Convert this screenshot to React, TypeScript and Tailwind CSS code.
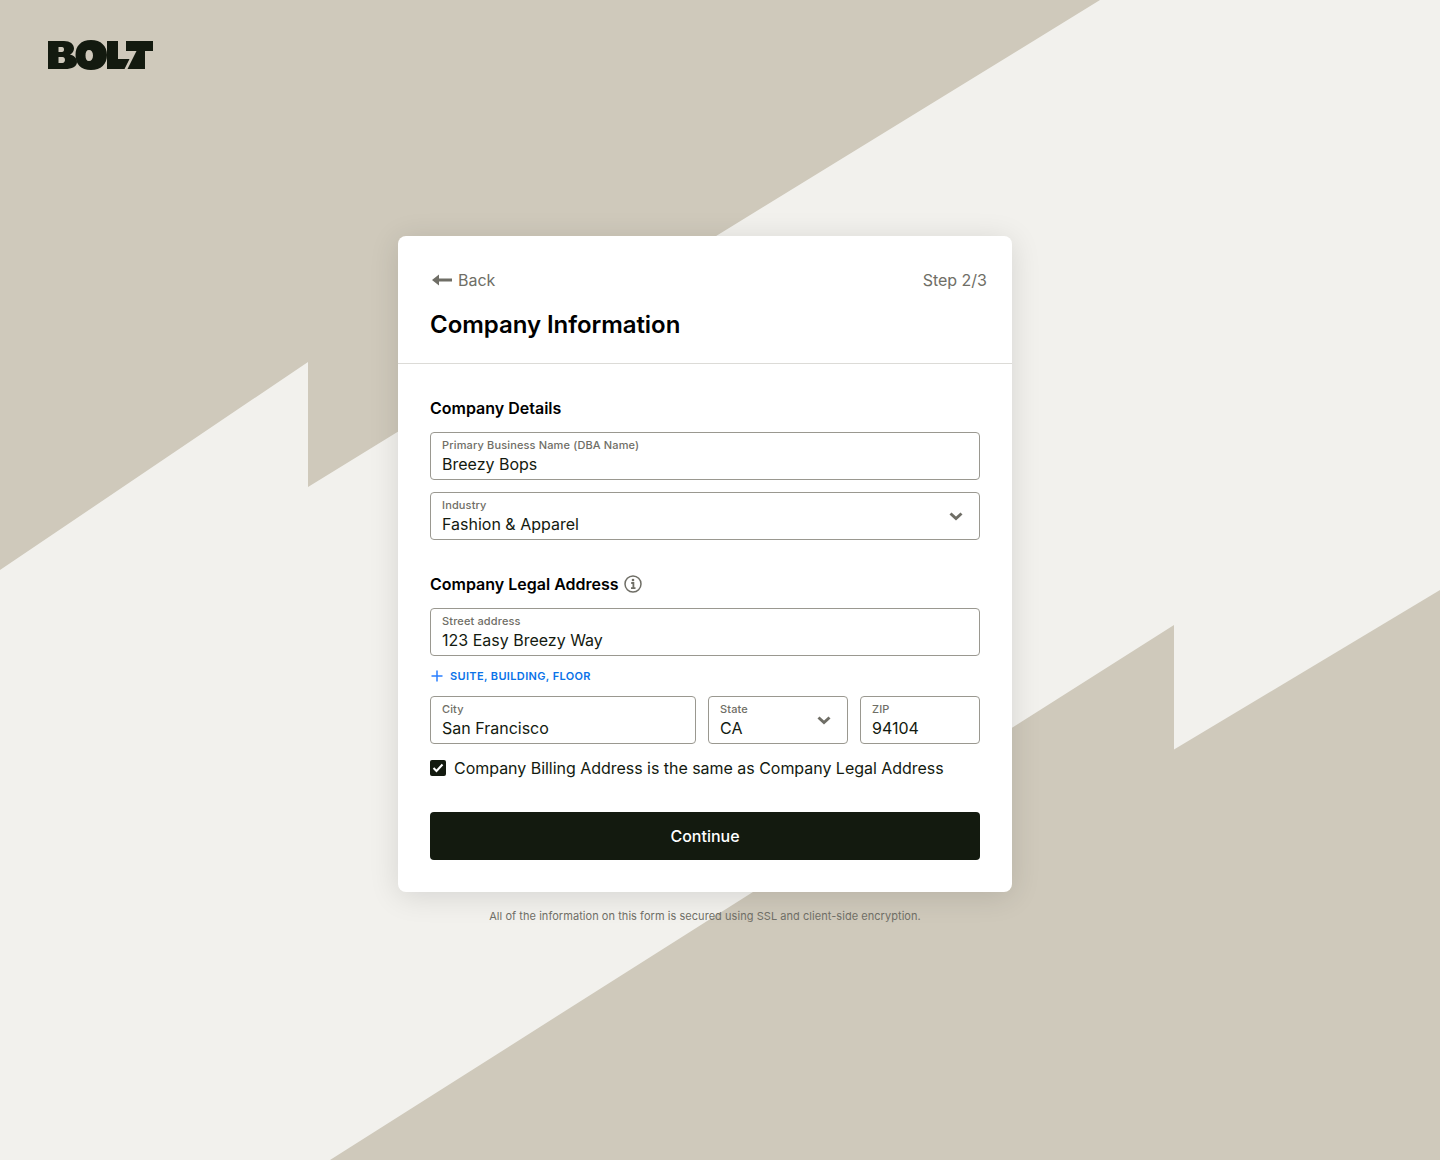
import React from "react";

function Logo() {
  return (
    <svg width="105" height="30" viewBox="0 0 105 30" className="block">
      <path fill="#131a0f" fillRule="evenodd" d="M0 1H16C22 1 26 4 26 8.500C26 11 24.500 13.500 22 14.500C26 15.500 29 18 29 22C29 26.500 24 29 17 29H0ZM10.500 7V12H14C15.500 12 16 11 16 9.500C16 8 15.500 7 14 7ZM10.500 17V23H14.500C16 23 17 21.500 17 20C17 18 16 17 14.500 17Z" />
      <path fill="#131a0f" fillRule="evenodd" d="M43 0C53 0 59 6 59 15C59 24 53 30 43 30C33 30 27.500 24 27.500 15C27.500 6 33 0 43 0ZM41 10C38.500 10 37.500 12 37.500 15.500C37.500 19 38.500 21 41 21C43.500 21 45 19 45 15.500C45 12 43.500 10 41 10Z" />
      <path fill="#131a0f" d="M59 1H70V19H81.500L76.500 29H59Z" />
      <path fill="#131a0f" d="M78 1H105V11H97V29H79.500L88.500 11H78Z" />
    </svg>
  );
}

function Chevron() {
  return (
    <svg width="14" height="9" viewBox="0 0 14 9" fill="none" className="block">
      <path d="M1.500 1.500L7 6.500L12.500 1.500" stroke="#6f6e66" strokeWidth="3" />
    </svg>
  );
}

function Field({ label, value, select, className }: { label: string; value: string; select?: boolean; className?: string }) {
  return (
    <div className={`relative h-12 rounded border border-[#9a9890] bg-white pl-[11px] pt-[5px] ${className ?? ""}`}>
      <div className="text-[11px] leading-[14px] font-medium tracking-[0.14px] text-[#6f6e66]">{label}</div>
      <div className="text-base leading-[24px] text-[#131a0f]">{value}</div>
      {select && (
        <div className="absolute right-4 top-[19px]">
          <Chevron />
        </div>
      )}
    </div>
  );
}

export default function App() {
  return (
    <div
      className="relative h-[1160px] w-full overflow-hidden bg-[#cfc9bb] text-[#131a0f]"
      style={{ fontFamily: "Inter, 'Liberation Sans', sans-serif" }}
    >
      <svg className="absolute inset-0" width="1440" height="1160" viewBox="0 0 1440 1160">
        <polygon fill="#f2f1ed" points="1100,0 1440,0 1440,590 1174,749.500 1174,625 330,1160 0,1160 0,570 308,362 308,487" />
      </svg>

      <div className="absolute left-12 top-10">
        <Logo />
      </div>

      <div className="relative flex flex-col items-center pr-[30px] pt-[236px]">
        <div className="w-[614px] rounded-lg bg-white shadow-[0_4px_30px_rgba(0,0,0,0.12)]">
          <div className="h-[128px] border-b border-[#dcdbd7] pl-8 pr-[25px] pt-[32px]">
            <div className="flex h-6 items-center justify-between text-base text-[#6f6e66]">
              <div className="flex items-center gap-[6px]">
                <svg width="20" height="12" viewBox="0 0 20 12" className="ml-[2px]">
                  <path fill="#6f6e66" d="M0 6L7 0.500V4.500H20V7.500H7V11.500Z" />
                </svg>
                <span>Back</span>
              </div>
              <span>Step 2/3</span>
            </div>
            <h1 className="mt-[17px] text-2xl leading-8 font-semibold tracking-[-0.05px] text-black">Company Information</h1>
          </div>

          <div className="px-8 pb-8 pt-[32px]">
            <h2 className="text-base leading-6 font-semibold text-black">Company Details</h2>
            <div className="mt-3 flex flex-col gap-3">
              <Field label="Primary Business Name (DBA Name)" value="Breezy Bops" />
              <Field label="Industry" value="Fashion & Apparel" select />
            </div>

            <div className="mt-8 flex h-6 items-center gap-[5px]">
              <h2 className="text-base leading-6 font-semibold text-black">Company Legal Address</h2>
              <svg width="18" height="18" viewBox="0 0 18 18" fill="none">
                <circle cx="9" cy="9" r="8" stroke="#6f6e66" strokeWidth="1.500" />
                <path d="M7.200 8H9.400V12.800M7 13.200H11.500" stroke="#6f6e66" strokeWidth="1.800" />
                <circle cx="9" cy="5" r="1.300" fill="#6f6e66" />
              </svg>
            </div>

            <div className="mt-3">
              <Field label="Street address" value="123 Easy Breezy Way" />
            </div>

            <div className="mt-3 flex h-4 items-center gap-[6px] text-[11px] font-semibold tracking-[0.36px] text-[#0a72e8]">
              <svg width="14" height="14" viewBox="0 0 14 14" fill="none">
                <path d="M7 1.500V12.500M1.500 7H12.500" stroke="#2a7fff" strokeWidth="1.500" />
              </svg>
              <span>SUITE, BUILDING, FLOOR</span>
            </div>

            <div className="mt-3 flex gap-3">
              <Field label="City" value="San Francisco" className="w-[266px]" />
              <Field label="State" value="CA" select className="w-[140px]" />
              <Field label="ZIP" value="94104" className="w-[120px]" />
            </div>

            <div className="mt-3 flex h-6 items-center gap-2 text-base text-[#131a0f]">
              <div className="flex h-4 w-4 items-center justify-center rounded-[2px] bg-[#131a0f]">
                <svg width="12" height="10" viewBox="0 0 12 10" fill="none">
                  <path d="M1.500 5L4.500 8L10.500 1.500" stroke="white" strokeWidth="2" />
                </svg>
              </div>
              <span className="tracking-[-0.03px]">Company Billing Address is the same as Company Legal Address</span>
            </div>

            <button className="mt-8 block h-12 w-full rounded bg-[#131a0f] text-base font-medium text-white">Continue</button>
          </div>
        </div>

        <p className="mt-[17px] text-[11px] leading-[14px] tracking-[0.05px] text-[#6f6e66]">
          All of the information on this form is secured using SSL and client-side encryption.
        </p>
      </div>
    </div>
  );
}
